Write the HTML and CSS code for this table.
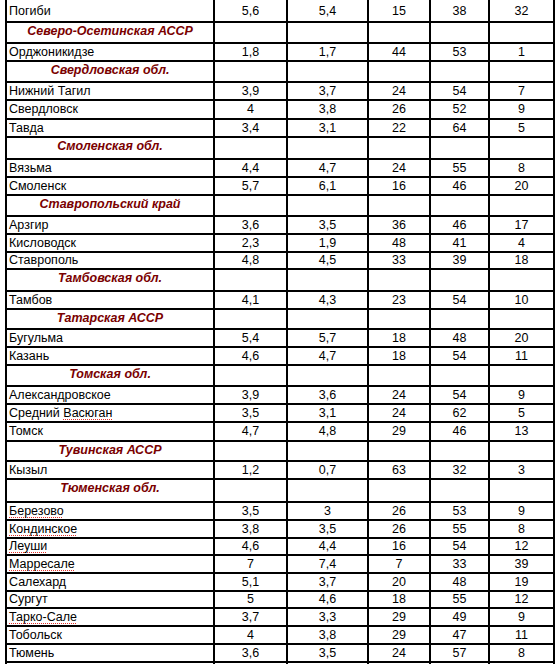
FILE: index.html
```html
<!DOCTYPE html>
<html lang="ru">
    <head>
        <meta charset="utf-8">
        <title>Климат | Станции</title>
        <meta name="viewport" content="width=device-width, initial-scale=1">
        <link rel="stylesheet" href="styles.css">
    </head>
    <body>
		<table class="stations">
			<colgroup>
				<col class="col-name">
				<col class="col-a">
				<col class="col-b">
				<col class="col-c">
				<col class="col-d">
				<col class="col-e">
			</colgroup>
			<tbody>
				<tr class="row first"><td class="name">Погиби</td><td>5,6</td><td>5,4</td><td>15</td><td>38</td><td>32</td></tr>

				<!-- Северная Осетия -->
				<tr class="region"><td class="name">Северо-Осетинская АССР</td><td></td><td></td><td></td><td></td><td></td></tr>
				<tr class="row"><td class="name">Орджоникидзе</td><td>1,8</td><td>1,7</td><td>44</td><td>53</td><td>1</td></tr>

				<tr class="region"><td class="name">Свердловская обл.</td><td></td><td></td><td></td><td></td><td></td></tr>
				<tr class="row"><td class="name">Нижний Тагил</td><td>3,9</td><td>3,7</td><td>24</td><td>54</td><td>7</td></tr>
				<tr class="row tall"><td class="name">Свердловск</td><td>4</td><td>3,8</td><td>26</td><td>52</td><td>9</td></tr>
				<tr class="row"><td class="name">Тавда</td><td>3,4</td><td>3,1</td><td>22</td><td>64</td><td>5</td></tr>

				<tr class="region wide"><td class="name">Смоленская обл.</td><td></td><td></td><td></td><td></td><td></td></tr>
				<tr class="row"><td class="name">Вязьма</td><td>4,4</td><td>4,7</td><td>24</td><td>55</td><td>8</td></tr>
				<tr class="row"><td class="name">Смоленск</td><td>5,7</td><td>6,1</td><td>16</td><td>46</td><td>20</td></tr>

				<tr class="region"><td class="name">Ставропольский край</td><td></td><td></td><td></td><td></td><td></td></tr>
				<tr class="row"><td class="name">Арзгир</td><td>3,6</td><td>3,5</td><td>36</td><td>46</td><td>17</td></tr>
				<tr class="row"><td class="name">Кисловодск</td><td>2,3</td><td>1,9</td><td>48</td><td>41</td><td>4</td></tr>
				<tr class="row short"><td class="name">Ставрополь</td><td>4,8</td><td>4,5</td><td>33</td><td>39</td><td>18</td></tr>

				<tr class="region wide"><td class="name">Тамбовская обл.</td><td></td><td></td><td></td><td></td><td></td></tr>
				<tr class="row"><td class="name">Тамбов</td><td>4,1</td><td>4,3</td><td>23</td><td>54</td><td>10</td></tr>

				<tr class="region narrow"><td class="name">Татарская АССР</td><td></td><td></td><td></td><td></td><td></td></tr>
				<tr class="row"><td class="name">Бугульма</td><td>5,4</td><td>5,7</td><td>18</td><td>48</td><td>20</td></tr>
				<tr class="row"><td class="name">Казань</td><td>4,6</td><td>4,7</td><td>18</td><td>54</td><td>11</td></tr>

				<tr class="region"><td class="name">Томская обл.</td><td></td><td></td><td></td><td></td><td></td></tr>
				<tr class="row"><td class="name">Александровское</td><td>3,9</td><td>3,6</td><td>24</td><td>54</td><td>9</td></tr>
				<tr class="row"><td class="name">Средний <span class="typo">Васюган</span></td><td>3,5</td><td>3,1</td><td>24</td><td>62</td><td>5</td></tr>
				<tr class="row tall"><td class="name">Томск</td><td>4,7</td><td>4,8</td><td>29</td><td>46</td><td>13</td></tr>

				<tr class="region narrow"><td class="name">Тувинская АССР</td><td></td><td></td><td></td><td></td><td></td></tr>
				<tr class="row"><td class="name">Кызыл</td><td>1,2</td><td>0,7</td><td>63</td><td>32</td><td>3</td></tr>

				<tr class="region widest"><td class="name">Тюменская обл.</td><td></td><td></td><td></td><td></td><td></td></tr>
				<tr class="row"><td class="name"><span class="typo">Березово</span></td><td>3,5</td><td>3</td><td>26</td><td>53</td><td>9</td></tr>
				<tr class="row"><td class="name"><span class="typo">Кондинское</span></td><td>3,8</td><td>3,5</td><td>26</td><td>55</td><td>8</td></tr>
				<tr class="row short"><td class="name"><span class="typo">Леуши</span></td><td>4,6</td><td>4,4</td><td>16</td><td>54</td><td>12</td></tr>
				<tr class="row"><td class="name"><span class="typo">Марресале</span></td><td>7</td><td>7,4</td><td>7</td><td>33</td><td>39</td></tr>
				<tr class="row"><td class="name">Салехард</td><td>5,1</td><td>3,7</td><td>20</td><td>48</td><td>19</td></tr>
				<tr class="row short"><td class="name">Сургут</td><td>5</td><td>4,6</td><td>18</td><td>55</td><td>12</td></tr>
				<tr class="row"><td class="name"><span class="typo">Тарко-Сале</span></td><td>3,7</td><td>3,3</td><td>29</td><td>49</td><td>9</td></tr>
				<tr class="row"><td class="name">Тобольск</td><td>4</td><td>3,8</td><td>29</td><td>47</td><td>11</td></tr>
				<tr class="row"><td class="name">Тюмень</td><td>3,6</td><td>3,5</td><td>24</td><td>57</td><td>8</td></tr>
				<tr class="row"><td class="name"></td><td></td><td></td><td></td><td></td><td></td></tr>
			</tbody>
		</table>
    </body>
</html>
```

FILE: styles.css
```css
/* Reset */
*,
*::after,
*::before {
	margin: 0;
	padding: 0;
	box-sizing: border-box;
}

/* Base */
body {
	font-family: "Liberation Sans", Arial, sans-serif;
	font-size: 12.5px;
	background: #fff;
	color: #000;
	overflow: hidden;
}

/* Table */
.stations {
	table-layout: fixed;
	width: 550px;
	margin: -4px 0 0 5px;
	border-collapse: separate;
	border-spacing: 0;
	border-left: 2px solid #000;
}

.col-name { width: 208px; }
.col-a { width: 73px; }
.col-b { width: 81px; }
.col-c { width: 62px; }
.col-d { width: 59px; }
.col-e { width: 65px; }

.stations td {
	border-right: 2px solid #000;
	border-bottom: 2px solid #000;
	line-height: 15px;
	text-align: center;
	vertical-align: middle;
	white-space: nowrap;
}

.stations td.name {
	text-align: left;
	padding-left: 2px;
}

/* Rows */
.row {
	height: 18px;
}
.row.short {
	height: 17px;
}
.row.tall {
	height: 19px;
}
.row.first {
	height: 27px;
}
.row.first td {
	vertical-align: bottom;
	padding-bottom: 2px;
}

.region {
	height: 21px;
}
.region.narrow {
	height: 20px;
}
.region.wide {
	height: 22px;
}
.region.widest {
	height: 23px;
}
.region td {
	vertical-align: top;
	padding-top: 1px;
}
.region td.name {
	text-align: center;
	padding-left: 0;
	font-weight: bold;
	font-style: italic;
	color: #7a0000;
}

/* spell-check marks */
.typo {
	text-decoration-line: underline;
	text-decoration-style: dotted;
	text-decoration-color: #e0302a;
	text-decoration-thickness: 1px;
	text-decoration-skip-ink: none;
	text-underline-offset: 2px;
}
```
